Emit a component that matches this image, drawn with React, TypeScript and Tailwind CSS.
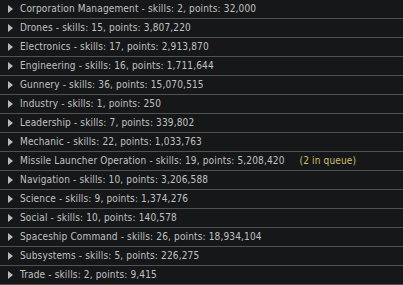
import React from "react";

const rows: { t: string; q?: string }[] = [
  { t: "Corporation Management - skills: 2, points: 32,000" },
  { t: "Drones - skills: 15, points: 3,807,220" },
  { t: "Electronics - skills: 17, points: 2,913,870" },
  { t: "Engineering - skills: 16, points: 1,711,644" },
  { t: "Gunnery - skills: 36, points: 15,070,515" },
  { t: "Industry - skills: 1, points: 250" },
  { t: "Leadership - skills: 7, points: 339,802" },
  { t: "Mechanic - skills: 22, points: 1,033,763" },
  { t: "Missile Launcher Operation - skills: 19, points: 5,208,420", q: "(2 in queue)" },
  { t: "Navigation - skills: 10, points: 3,206,588" },
  { t: "Science - skills: 9, points: 1,374,276" },
  { t: "Social - skills: 10, points: 140,578" },
  { t: "Spaceship Command - skills: 26, points: 18,934,104" },
  { t: "Subsystems - skills: 5, points: 226,275" },
  { t: "Trade - skills: 2, points: 9,415" },
];

export default function App() {
  return (
    <div
      className="w-[403px] h-[285px] bg-[#151719] overflow-hidden flex flex-col"
      style={{ fontFamily: '"DejaVu Sans Condensed", "Liberation Sans", sans-serif' }}
    >
      {rows.map((r) => (
        <div
          key={r.t}
          className="h-[19px] shrink-0 flex items-center border-b border-[#4f5254] text-[10px] text-[#c0c2c2] leading-none"
        >
          <svg width="5" height="8" viewBox="0 0 5 8" className="ml-[8px] mr-[7px] shrink-0">
            <path d="M0 0 L5 4 L0 8 Z" fill="#b8baba" />
          </svg>
          <span className="whitespace-pre tracking-[0.15px]">{r.t}</span>
          {r.q && <span className="ml-[15px] text-[#d2bc6c] tracking-[0.15px]">{r.q}</span>}
        </div>
      ))}
    </div>
  );
}
